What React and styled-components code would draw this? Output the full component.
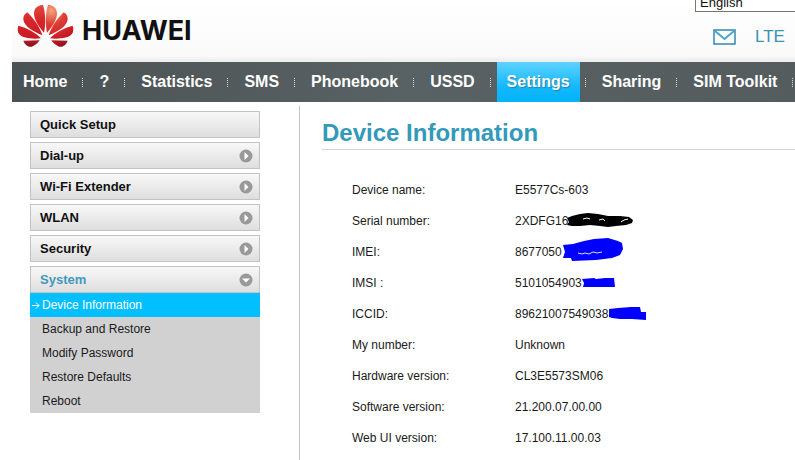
import React from 'react';
import styled, { createGlobalStyle } from 'styled-components';

const GlobalStyle = createGlobalStyle`
  * {
    box-sizing: border-box;
  }

  body {
    margin: 0;
    background: #fff;
    color: #1a1a1a;
    font-family: 'Liberation Sans', Arial, sans-serif;
    font-size: 12px;
  }

  ul {
    list-style: none;
    margin: 0;
    padding: 0;
  }

  a {
    color: inherit;
    text-decoration: none;
  }
`;

const Page = styled.div`
  min-height: 100vh;
  padding-left: 12px;
  overflow: hidden;
`;

const Header = styled.header`
  display: flex;
  justify-content: space-between;
  height: 62px;
  overflow: hidden;
  background: linear-gradient(#fff, #fbfafa 56px, #efefef 60px);
`;

const Logo = styled.a`
  display: flex;
  align-items: center;
  gap: 8px;
  height: 52px;
  padding-left: 5px;
`;

const LogoName = styled.span`
  padding-top: 10px;
  color: #111;
  font-family: Inter, sans-serif;
  font-size: 27px;
  font-weight: 700;
  line-height: 28px;
`;

const HeaderTools = styled.div`
  display: flex;
  flex-direction: column;
  gap: 15px;
  width: 100px;
`;

const Language = styled.select`
  flex: none;
  width: 140px;
  height: 22px;
  margin-top: -10px;
  padding-top: 2px;
  border: 1px solid #767676;
  border-radius: 0;
  background: #fff;
  color: #111;
  font-family: inherit;
  font-size: 13px;
`;

const Status = styled.div`
  display: flex;
  align-items: center;
  gap: 19px;
  padding-left: 18px;
  color: #3b93b3;
  font-size: 17px;
  line-height: 20px;

  a {
    display: flex;
  }
`;

const Nav = styled.nav`
  height: 40px;
  overflow: hidden;
  background: linear-gradient(to right, #4a5254, #586163 50%, #545c5e);
`;

const NavList = styled.ul`
  display: flex;
  padding-left: 1px;
`;

const NavItem = styled.li`
  flex: none;
  display: flex;
  align-items: center;

  &::after {
    content: '';
    width: 1px;
    height: 9px;
    margin: 0 6px 0 5px;
    background: repeating-linear-gradient(#d5dada 0 1px, transparent 1px 2px);
  }
`;

const NavLink = styled.a`
  padding: 0 10px;
  color: #fff;
  font-size: 16px;
  font-weight: bold;
  line-height: 40px;
  background: ${(props) =>
    props.$active ? 'linear-gradient(#5fd2ff, #14b9fb 60%, #02b2fa)' : 'none'};
  text-shadow: ${(props) => (props.$active ? '1px 1px 1px #2f7fa3' : 'none')};
`;

const Body = styled.div`
  display: flex;
  padding: 4px 0 0 18px;
`;

const Sidebar = styled.aside`
  flex: none;
  width: 230px;
  padding-top: 5px;
`;

const Menu = styled.ul`
  display: flex;
  flex-direction: column;
  gap: 4px;
`;

const MenuButton = styled.button`
  display: flex;
  align-items: center;
  justify-content: space-between;
  width: 100%;
  height: 27px;
  padding: 0 6px 0 9px;
  border: 1px solid #c3c3c3;
  background: linear-gradient(#f8f8f8, #dedede);
  color: ${(props) => (props.$open ? '#4398bd' : '#111')};
  font-family: inherit;
  font-size: 13px;
  font-weight: bold;
  text-align: left;
`;

const SubMenu = styled.ul`
  background: #d1d1d1;
`;

const SubLink = styled.a`
  display: flex;
  align-items: center;
  height: 24px;
  background: ${(props) => (props.$active ? '#02c0ff' : 'transparent')};
  color: ${(props) => (props.$active ? '#fff' : '#1a1a1a')};
`;

const Marker = styled.span`
  display: flex;
  width: 12px;
  padding-left: 2px;
`;

const Content = styled.main`
  flex: 1;
  min-height: 354px;
  margin-left: 39px;
  padding-left: 22px;
  border-left: 1px solid #c4c4c4;
`;

const Title = styled.h1`
  margin: 0 0 24px;
  padding: 11px 0 0;
  border-bottom: 1px solid #d3d3d3;
  color: #3399bb;
  font-size: 24px;
  line-height: 32px;
`;

const InfoTable = styled.table`
  margin-left: 30px;
  border-collapse: collapse;

  th,
  td {
    height: 31px;
    padding: 0;
    font-weight: normal;
    text-align: left;
  }

  th {
    width: 163px;
  }
`;

const Value = styled.span`
  position: relative;
`;

// marker strokes laid over the end of a private value
const Scribble = styled.svg`
  position: absolute;
  top: 50%;
  left: 100%;
  transform: translate(-4px, -50%);
`;

const navItems = [
  'Home',
  '?',
  'Statistics',
  'SMS',
  'Phonebook',
  'USSD',
  'Settings',
  'Sharing',
  'SIM Toolkit',
];

const menuItems = [
  { label: 'Quick Setup' },
  { label: 'Dial-up', arrow: true },
  { label: 'Wi-Fi Extender', arrow: true },
  { label: 'WLAN', arrow: true },
  { label: 'Security', arrow: true },
  {
    label: 'System',
    arrow: true,
    children: [
      'Device Information',
      'Backup and Restore',
      'Modify Password',
      'Restore Defaults',
      'Reboot',
    ],
  },
];

const SerialScribble = () => (
  <Scribble width="72" height="28" viewBox="0 0 72 28" aria-hidden="true">
    <path
      d="M3 11 L8 9 L16 7 L24 6 L34 7 L44 9 L56 9 L65 10 L69 13 L68 16 L62 18 L52 19 L44 20 L36 19 L26 18 L16 19 L8 19 L3 18 L5 15 Z"
      fill="#000"
    />
    <path
      d="M19 12 l4 -1 l3 1 M35 13 l4 -1 l2 2 M57 15 l3 -2 l4 -1"
      fill="none"
      stroke="#fff"
    />
  </Scribble>
);

const ImeiScribble = () => (
  <Scribble width="72" height="28" viewBox="0 0 72 28" aria-hidden="true">
    <path
      d="M5 7 L15 6 L26 3 L36 1 L50 0 L60 3 L64 5 L65 11 L62 17 L54 20 L38 22 L14 23 L13 20 L5 20 L7 14 Z"
      fill="#00f"
    />
    <path
      d="M20 15 l4 1 l3 -1 l4 1 l4 -2 l4 1 l5 -1"
      fill="none"
      stroke="#dde"
    />
  </Scribble>
);

const ImsiScribble = () => (
  <Scribble width="72" height="28" viewBox="0 0 72 28" aria-hidden="true">
    <path
      d="M4 10 L16 9 L18 10 L27 9 L36 9 L37 18 L30 18 L22 18 L14 18 L5 18 L6 14 Z"
      fill="#00f"
    />
  </Scribble>
);

const IccidScribble = () => (
  <Scribble width="72" height="28" viewBox="0 0 72 28" aria-hidden="true">
    <path
      d="M5 9 L14 8 L27 7 L36 7 L37 12 L42 12 L42 20 L28 19 L16 19 L8 18 L5 17 Z"
      fill="#00f"
    />
  </Scribble>
);

const rows = [
  { label: 'Device name:', value: 'E5577Cs-603' },
  { label: 'Serial number:', value: '2XDFG16', Cover: SerialScribble },
  { label: 'IMEI:', value: '8677050', Cover: ImeiScribble },
  { label: 'IMSI :', value: '5101054903', Cover: ImsiScribble },
  { label: 'ICCID:', value: '89621007549038', Cover: IccidScribble },
  { label: 'My number:', value: 'Unknown' },
  { label: 'Hardware version:', value: 'CL3E5573SM06' },
  { label: 'Software version:', value: '21.200.07.00.00' },
  { label: 'Web UI version:', value: '17.100.11.00.03' },
];

const ArrowBadge = ({ open }) => (
  <svg width="14" height="14" viewBox="0 0 14 14" aria-hidden="true">
    <circle cx="7" cy="7" r="6.5" fill="#999" />
    <path d={open ? 'M3 5.5h8L7 9.5z' : 'M5.5 3v8l4-4z'} fill="#fff" />
  </svg>
);

const Envelope = () => (
  <svg width="23" height="16" viewBox="0 0 23 16" aria-hidden="true">
    <rect x="1" y="1" width="21" height="14" fill="#fff" stroke="#3f8fb5" strokeWidth="1.6" />
    <path d="M2 2 L11.5 10 L21 2" fill="none" stroke="#4aa5c8" strokeWidth="2" />
  </svg>
);

const petals = [
  'M131 98C108 72 96 48 103 30C107 20 118 15 128 15C135 35 137 70 131 98Z',
  'M126 106C96 94 72 80 69 58C68 48 74 41 81 37C100 56 118 80 126 106Z',
  'M122 115C95 118 66 114 57 103C51 96 51 86 54 77C80 83 106 98 122 115Z',
  'M118 121L69 122C73 134 84 142 94 140C104 137 113 129 118 121Z',
];

const LogoMark = () => (
  <svg width="57" height="44" viewBox="50 12 171 132" aria-hidden="true">
    <defs>
      <linearGradient id="petalLeft" gradientUnits="userSpaceOnUse" x1="0" y1="15" x2="0" y2="140">
        <stop offset="0" stopColor="#e2483c" />
        <stop offset="0.4" stopColor="#d5242a" />
        <stop offset="0.8" stopColor="#cb1a24" />
        <stop offset="1" stopColor="#851218" />
      </linearGradient>
      <radialGradient id="petalRight" gradientUnits="userSpaceOnUse" cx="118" cy="32" r="115">
        <stop offset="0" stopColor="#f3a47c" />
        <stop offset="0.35" stopColor="#de3f36" />
        <stop offset="0.75" stopColor="#cb1a24" />
        <stop offset="1" stopColor="#851218" />
      </radialGradient>
    </defs>
    <g fill="url(#petalLeft)">
      {petals.map((d) => (
        <path key={d} d={d} />
      ))}
    </g>
    <g fill="url(#petalRight)" transform="matrix(-1 0 0 1 271 0)">
      {petals.map((d) => (
        <path key={d} d={d} />
      ))}
    </g>
  </svg>
);

const App = () => {
  return (
    <Page>
      <GlobalStyle />
      <Header>
        <Logo href="#home">
          <LogoMark />
          <LogoName>HUAWEI</LogoName>
        </Logo>
        <HeaderTools>
          <Language aria-label="Language" defaultValue="en">
            <option value="en">English</option>
          </Language>
          <Status>
            <a href="#sms" aria-label="Messages">
              <Envelope />
            </a>
            <span>LTE</span>
          </Status>
        </HeaderTools>
      </Header>

      <Nav>
        <NavList>
          {navItems.map((item) => (
            <NavItem key={item}>
              <NavLink href="#nav" $active={item === 'Settings'}>
                {item}
              </NavLink>
            </NavItem>
          ))}
        </NavList>
      </Nav>

      <Body>
        <Sidebar>
          <Menu>
            {menuItems.map(({ label, arrow, children }) => (
              <li key={label}>
                <MenuButton type="button" $open={Boolean(children)}>
                  {label}
                  {arrow && <ArrowBadge open={Boolean(children)} />}
                </MenuButton>
                {children && (
                  <SubMenu>
                    {children.map((child, i) => (
                      <li key={child}>
                        <SubLink href="#system" $active={i === 0}>
                          <Marker>
                            {i === 0 && (
                              <svg width="8" height="7" viewBox="0 0 8 7" aria-hidden="true">
                                <path d="M0 3.5h7M4 0.5l3 3l-3 3" fill="none" stroke="#fff" />
                              </svg>
                            )}
                          </Marker>
                          {child}
                        </SubLink>
                      </li>
                    ))}
                  </SubMenu>
                )}
              </li>
            ))}
          </Menu>
        </Sidebar>

        <Content>
          <Title>Device Information</Title>
          <InfoTable>
            <tbody>
              {rows.map(({ label, value, Cover }) => (
                <tr key={label}>
                  <th scope="row">{label}</th>
                  <td>
                    <Value>
                      {value}
                      {Cover && <Cover />}
                    </Value>
                  </td>
                </tr>
              ))}
            </tbody>
          </InfoTable>
        </Content>
      </Body>
    </Page>
  );
};

export default App;
